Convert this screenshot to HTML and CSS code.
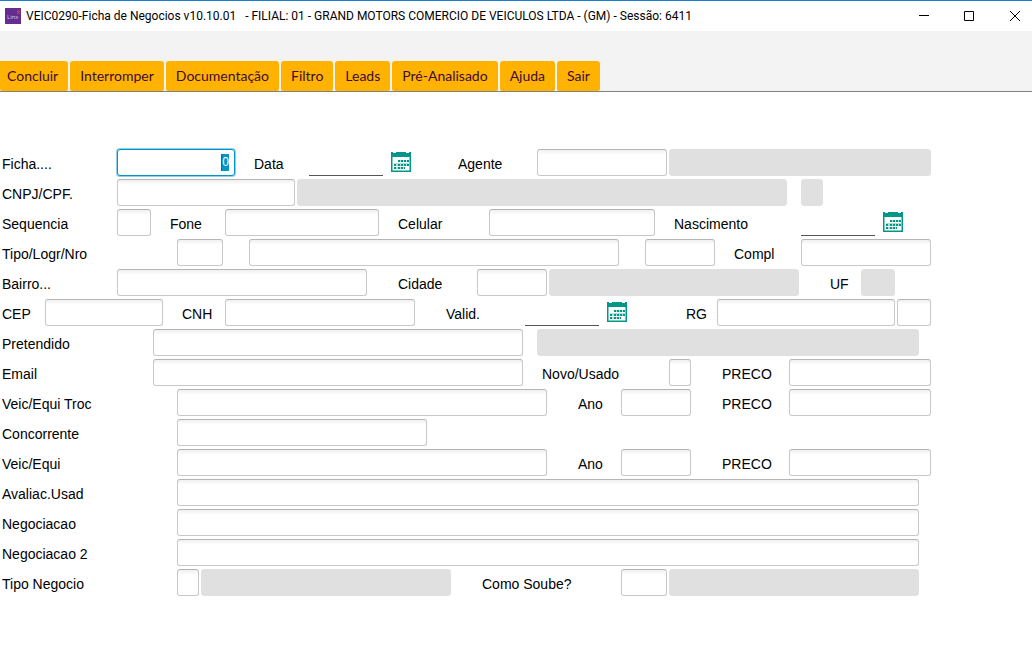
FILE: index.html
```html
<!DOCTYPE html>
<html lang="pt-BR">
<head>
<meta charset="utf-8">
<title>VEIC0290-Ficha de Negocios</title>
<link rel="stylesheet" href="styles.css">
</head>
<body>
<svg class="sprite" width="0" height="0" aria-hidden="true">
  <symbol id="calendar" viewBox="0 0 20 20">
    <path fill="#009688" fill-rule="evenodd" d="M0 0H20V20H0ZM1.500 5V18.500H18.500V5Z"/>
    <path fill="#fff" d="M2 0h3v1h-3zM15 0h3v1h-3z"/>
    <path fill="#009688" opacity=".3" d="M7 8h11v2H7zM3 11h15v3H3zM3 15h11v2H3z"/>
    <path fill="#009688" d="M7 8h2v2h-2zM10 8h2v2h-2zM13 8h2v2h-2zM16 8h2v2h-2zM3 12h2v2h-2zM7 12h2v2h-2zM10 12h2v2h-2zM13 12h2v2h-2zM16 12h2v2h-2zM3 15h2v2h-2zM7 15h2v2h-2zM10 15h2v2h-2zM13 15h1v2h-1z"/>
  </symbol>
</svg>
<header class="titlebar">
  <svg class="logo" viewBox="0 0 16 16" aria-hidden="true">
    <rect width="16" height="16" fill="#652d90"/>
    <text class="logo-text" x="2" y="11">Linx</text>
    <path d="M12 3l3 3M15 3l-3 3M12 3h2" stroke="#e8452c" fill="none"/>
  </svg>
  <h1 class="title">VEIC0290-Ficha de Negocios v10.10.01 &nbsp; - FILIAL: 01 - GRAND MOTORS COMERCIO DE VEICULOS LTDA - (GM) - Sessão: 6411</h1>
  <div class="window-buttons">
    <button class="window-button" type="button" aria-label="Minimizar"><svg width="12" height="12" viewBox="0 0 12 12"><path d="M2 5.500h10"/></svg></button>
    <button class="window-button" type="button" aria-label="Maximizar"><svg width="12" height="12" viewBox="0 0 12 12"><path d="M1.500 1.500h9v9h-9z"/></svg></button>
    <button class="window-button" type="button" aria-label="Fechar"><svg width="12" height="12" viewBox="0 0 12 12"><path d="M1 1l10 10M11 1L1 11"/></svg></button>
  </div>
</header>
<nav class="toolbar">
  <button class="tool tool-first" type="button">Concluir</button>
  <button class="tool" type="button">Interromper</button>
  <button class="tool" type="button">Documentação</button>
  <button class="tool" type="button">Filtro</button>
  <button class="tool" type="button">Leads</button>
  <button class="tool" type="button">Pré-Analisado</button>
  <button class="tool" type="button">Ajuda</button>
  <button class="tool" type="button">Sair</button>
</nav>
<main>
<form class="form">
  <div class="row">
    <label class="label c1" for="ficha">Ficha....</label>
    <div class="field focused c11 w10"><input class="focus-input" id="ficha" size="1" value="0"></div>
    <label class="label c22" for="data">Data</label>
    <div class="date c27"><input class="date-input" id="data"><button class="date-button" type="button" aria-label="Abrir calendário"><svg class="calendar"><use href="#calendar"/></svg></button></div>
    <label class="label c39" for="agente">Agente</label>
    <input class="field c46 w11" id="agente">
    <input class="field locked c57 w22" aria-label="Nome do agente" readonly>
  </div>
  <div class="row">
    <label class="label c1" for="cnpj">CNPJ/CPF.</label>
    <input class="field c11 w15" id="cnpj">
    <input class="field locked c26 w41" aria-label="Nome do cliente" readonly>
    <input class="field locked c68 w2" aria-label="Tipo de pessoa" readonly>
  </div>
  <div class="row">
    <label class="label c1" for="sequencia">Sequencia</label>
    <input class="field c11 w3" id="sequencia">
    <label class="label c15" for="fone">Fone</label>
    <input class="field c20 w13" id="fone">
    <label class="label c34" for="celular">Celular</label>
    <input class="field c42 w14" id="celular">
    <label class="label c57" for="nascimento">Nascimento</label>
    <div class="date c68"><input class="date-input" id="nascimento"><button class="date-button" type="button" aria-label="Abrir calendário"><svg class="calendar"><use href="#calendar"/></svg></button></div>
  </div>
  <div class="row">
    <label class="label c1" for="tipo">Tipo/Logr/Nro</label>
    <input class="field c16 w4" id="tipo">
    <input class="field c22 w31" aria-label="Logradouro">
    <input class="field c55 w6" aria-label="Número">
    <label class="label c62" for="compl">Compl</label>
    <input class="field c68 w11" id="compl">
  </div>
  <div class="row">
    <label class="label c1" for="bairro">Bairro...</label>
    <input class="field c11 w21" id="bairro">
    <label class="label c34" for="cidade">Cidade</label>
    <input class="field c41 w6" id="cidade">
    <input class="field locked c47 w21" aria-label="Nome da cidade" readonly>
    <label class="label c70" for="uf">UF</label>
    <input class="field locked c73 w3" id="uf" readonly>
  </div>
  <div class="row">
    <label class="label c1" for="cep">CEP</label>
    <input class="field c5 w10" id="cep">
    <label class="label c16" for="cnh">CNH</label>
    <input class="field c20 w16" id="cnh">
    <label class="label c38" for="valid">Valid.</label>
    <div class="date c45"><input class="date-input" id="valid"><button class="date-button" type="button" aria-label="Abrir calendário"><svg class="calendar"><use href="#calendar"/></svg></button></div>
    <label class="label c58" for="rg">RG</label>
    <input class="field c61 w15" id="rg">
    <input class="field c76 w3" aria-label="Órgão emissor">
  </div>
  <div class="row">
    <label class="label c1" for="pretendido">Pretendido</label>
    <input class="field c14 w31" id="pretendido">
    <input class="field locked c46 w32" aria-label="Descrição do pretendido" readonly>
  </div>
  <div class="row">
    <label class="label c1" for="email">Email</label>
    <input class="field c14 w31" id="email">
    <label class="label c46" for="novo">Novo/Usado</label>
    <input class="field c57 w2" id="novo">
    <label class="label c61" for="preco1">PRECO</label>
    <input class="field c67 w12" id="preco1">
  </div>
  <div class="row">
    <label class="label c1" for="troca">Veic/Equi Troc</label>
    <input class="field c16 w31" id="troca">
    <label class="label c49" for="ano1">Ano</label>
    <input class="field c53 w6" id="ano1">
    <label class="label c61" for="preco2">PRECO</label>
    <input class="field c67 w12" id="preco2">
  </div>
  <div class="row">
    <label class="label c1" for="concorrente">Concorrente</label>
    <input class="field c16 w21" id="concorrente">
  </div>
  <div class="row">
    <label class="label c1" for="veic">Veic/Equi</label>
    <input class="field c16 w31" id="veic">
    <label class="label c49" for="ano2">Ano</label>
    <input class="field c53 w6" id="ano2">
    <label class="label c61" for="preco3">PRECO</label>
    <input class="field c67 w12" id="preco3">
  </div>
  <div class="row">
    <label class="label c1" for="avaliac">Avaliac.Usad</label>
    <input class="field c16 w62" id="avaliac">
  </div>
  <div class="row">
    <label class="label c1" for="negociacao">Negociacao</label>
    <input class="field c16 w62" id="negociacao">
  </div>
  <div class="row">
    <label class="label c1" for="negociacao2">Negociacao 2</label>
    <input class="field c16 w62" id="negociacao2">
  </div>
  <div class="row">
    <label class="label c1" for="tiponeg">Tipo Negocio</label>
    <input class="field c16 w2" id="tiponeg">
    <input class="field locked c18 w21" aria-label="Descrição do tipo" readonly>
    <label class="label c41" for="soube">Como Soube?</label>
    <input class="field c53 w4" id="soube">
    <input class="field locked c57 w21" aria-label="Descrição da origem" readonly>
  </div>
</form>
</main>
</body>
</html>
```
FILE: styles.css
```css
* { box-sizing: border-box; }

body {
  margin: 0;
  background: #fff;
  color: #000;
  font: 14px/16px "Liberation Sans", Arial, sans-serif;
}

.sprite { display: block; }

/* Window title bar */
.titlebar {
  display: flex;
  align-items: center;
  height: 31px;
  border-top: 1px solid #1c7fd0;
  padding-left: 5px;
}
.logo { width: 16px; height: 16px; margin-right: 5px; }
.logo-text { font: 6px "Open Sans", sans-serif; fill: #d9cbe8; }
.title {
  flex: 1;
  margin: 0;
  font: 400 12px/16px Roboto, sans-serif;
  white-space: nowrap;
}
.window-buttons { display: flex; }
.window-button {
  display: grid;
  place-items: center;
  width: 46px;
  height: 28px;
  padding: 0 0 0 12px;
  border: 0;
  background: none;
}
.window-button path { fill: none; stroke: #000; }

/* Toolbar */
.toolbar {
  display: flex;
  align-items: flex-end;
  gap: 2px;
  height: 61px;
  border-bottom: 1px solid #808080;
  background: #f3f3f3;
}
.tool {
  height: 30px;
  padding: 0 10px;
  border: 0;
  border-radius: 3px 3px 2px 2px;
  background: #ffb300;
  color: #3e0a3a;
  font: 14px/20px Lato, sans-serif;
  white-space: nowrap;
}
.tool-first { padding-left: 7px; border-top-left-radius: 0; }

/* Form: every row shares one character grid */
.form {
  display: grid;
  gap: 3px;
  padding: 57px 3px 57px 0;
}
.row {
  display: grid;
  grid-template-columns: 9px repeat(85, minmax(0, 1fr));
  height: 27px;
}
.row > * { grid-row: 1; }

.label {
  align-self: center;
  padding: 2px 0 0 5px;
  white-space: nowrap;
}
.label.c1 { padding-left: 2px; }

.field {
  min-width: 0;
  width: auto;
  height: 27px;
  margin: 0 2px 0 0;
  padding: 0 5px;
  border: 1px solid #c8c8c8;
  border-top-color: #b5b5b5;
  border-radius: 3px;
  background: linear-gradient(#f0f0f0, #fff 5px);
  font: inherit;
  outline: 0;
}
.locked { border-color: #e0e0e0; background: #e0e0e0; }
.focused {
  display: flex;
  align-items: center;
  justify-content: flex-end;
  border-color: #0093cd;
  background: #fff;
  box-shadow: 0 0 0 1px #8fd0ea;
}
.focus-input {
  width: 8px;
  height: 17px;
  padding: 0;
  border: 0;
  border-left: 1px solid #555;
  background: #0096c9;
  color: #fff;
  font: 12px/17px "Liberation Sans", Arial, sans-serif;
  text-align: right;
  outline: 0;
}

.date {
  grid-column-end: span 9;
  display: flex;
  align-items: flex-start;
  gap: 8px;
}
.date-input {
  width: 74px;
  height: 27px;
  padding: 0;
  border: 0;
  border-bottom: 1px solid #555;
  background: none;
  font: inherit;
  outline: 0;
}
.date-button {
  flex: none;
  width: 20px;
  height: 23px;
  padding: 3px 0 0;
  border: 0;
  background: none;
}
.calendar { display: block; width: 20px; height: 20px; }

/* Starting columns */
.c1 { grid-column-start: 1; }
.c5 { grid-column-start: 5; }
.c11 { grid-column-start: 11; }
.c14 { grid-column-start: 14; }
.c15 { grid-column-start: 15; }
.c16 { grid-column-start: 16; }
.c18 { grid-column-start: 18; }
.c20 { grid-column-start: 20; }
.c22 { grid-column-start: 22; }
.c26 { grid-column-start: 26; }
.c27 { grid-column-start: 27; }
.c34 { grid-column-start: 34; }
.c38 { grid-column-start: 38; }
.c39 { grid-column-start: 39; }
.c41 { grid-column-start: 41; }
.c42 { grid-column-start: 42; }
.c45 { grid-column-start: 45; }
.c46 { grid-column-start: 46; }
.c47 { grid-column-start: 47; }
.c49 { grid-column-start: 49; }
.c53 { grid-column-start: 53; }
.c55 { grid-column-start: 55; }
.c57 { grid-column-start: 57; }
.c58 { grid-column-start: 58; }
.c61 { grid-column-start: 61; }
.c62 { grid-column-start: 62; }
.c67 { grid-column-start: 67; }
.c68 { grid-column-start: 68; }
.c70 { grid-column-start: 70; }
.c73 { grid-column-start: 73; }
.c76 { grid-column-start: 76; }

/* Field widths, in columns */
.w2 { grid-column-end: span 2; }
.w3 { grid-column-end: span 3; }
.w4 { grid-column-end: span 4; }
.w6 { grid-column-end: span 6; }
.w10 { grid-column-end: span 10; }
.w11 { grid-column-end: span 11; }
.w12 { grid-column-end: span 12; }
.w13 { grid-column-end: span 13; }
.w14 { grid-column-end: span 14; }
.w15 { grid-column-end: span 15; }
.w16 { grid-column-end: span 16; }
.w21 { grid-column-end: span 21; }
.w22 { grid-column-end: span 22; }
.w31 { grid-column-end: span 31; }
.w32 { grid-column-end: span 32; }
.w41 { grid-column-end: span 41; }
.w62 { grid-column-end: span 62; }
```
